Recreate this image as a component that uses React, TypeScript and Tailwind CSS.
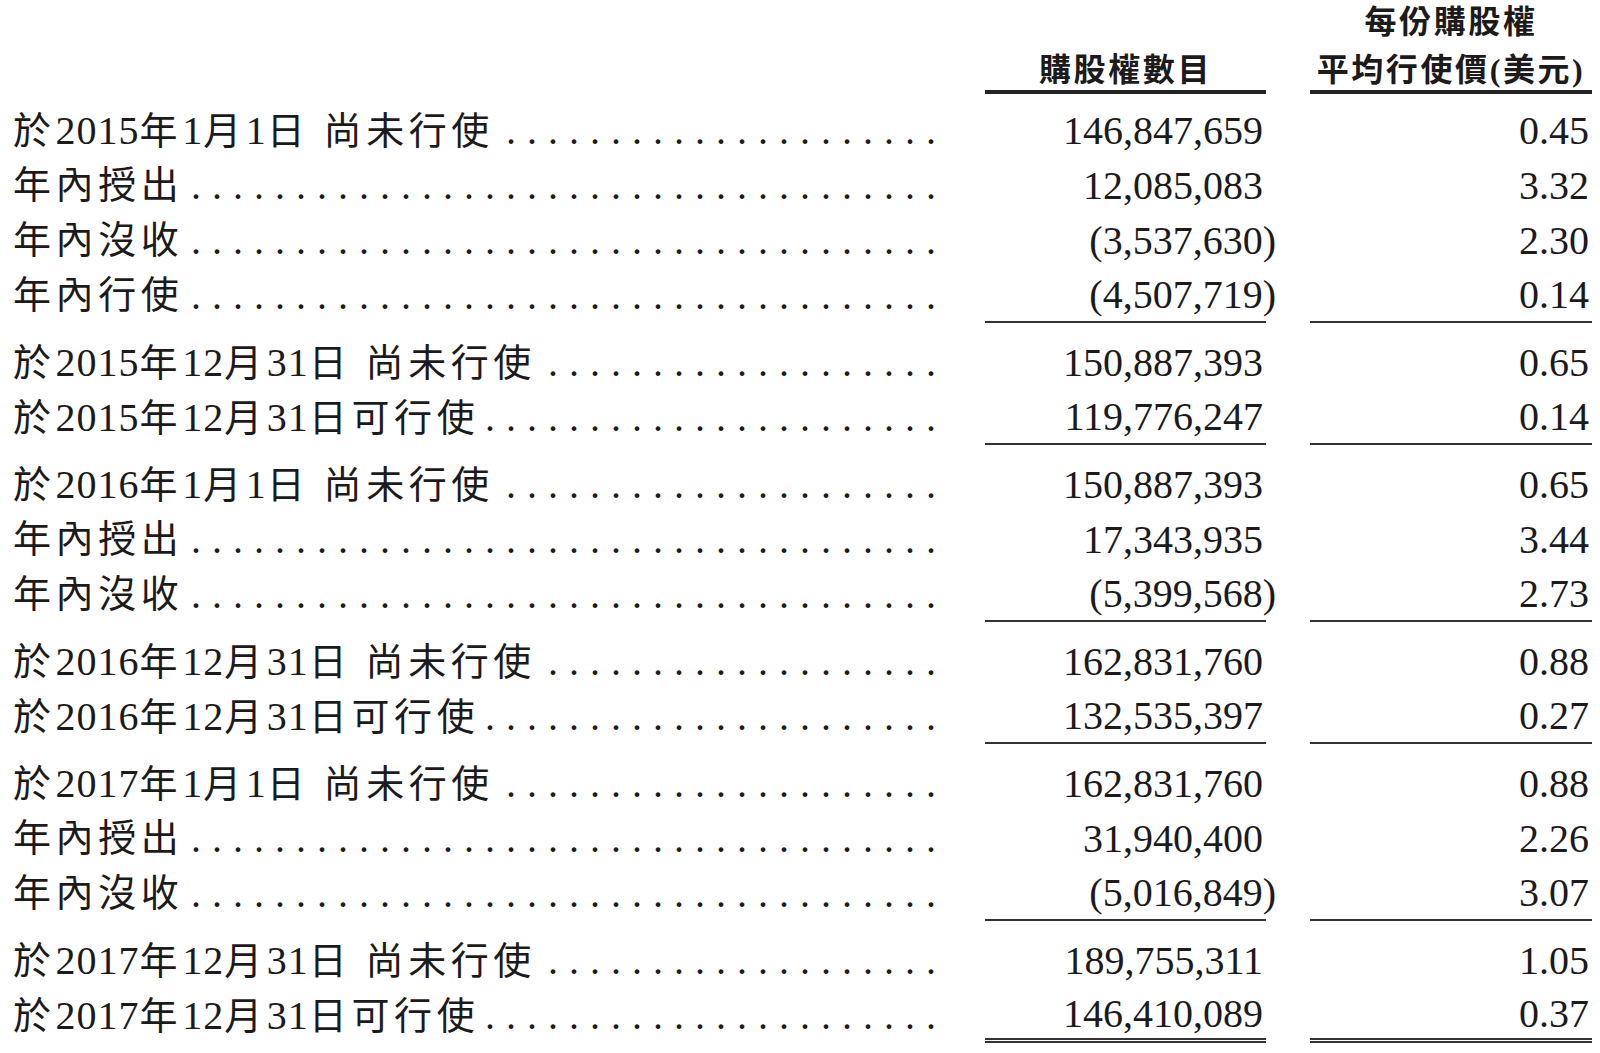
import React, { useLayoutEffect, useRef, useState } from "react";

type Row = { label: string; a: string; b: string; gap?: boolean };

const sections: Row[][] = [
  [
    { label: "於2015年1月1日 尚未行使", a: "146,847,659", b: "0.45", gap: true },
    { label: "年內授出", a: "12,085,083", b: "3.32" },
    { label: "年內沒收", a: "(3,537,630)", b: "2.30" },
    { label: "年內行使", a: "(4,507,719)", b: "0.14" },
  ],
  [
    { label: "於2015年12月31日 尚未行使", a: "150,887,393", b: "0.65", gap: true },
    { label: "於2015年12月31日可行使", a: "119,776,247", b: "0.14" },
  ],
  [
    { label: "於2016年1月1日 尚未行使", a: "150,887,393", b: "0.65", gap: true },
    { label: "年內授出", a: "17,343,935", b: "3.44" },
    { label: "年內沒收", a: "(5,399,568)", b: "2.73" },
  ],
  [
    { label: "於2016年12月31日 尚未行使", a: "162,831,760", b: "0.88", gap: true },
    { label: "於2016年12月31日可行使", a: "132,535,397", b: "0.27" },
  ],
  [
    { label: "於2017年1月1日 尚未行使", a: "162,831,760", b: "0.88", gap: true },
    { label: "年內授出", a: "31,940,400", b: "2.26" },
    { label: "年內沒收", a: "(5,016,849)", b: "3.07" },
  ],
  [
    { label: "於2017年12月31日 尚未行使", a: "189,755,311", b: "1.05", gap: true },
    { label: "於2017年12月31日可行使", a: "146,410,089", b: "0.37" },
  ],
];

function Label({ text }: { text: string }) {
  const parts = text.split(/(\d+)/).filter((p) => p.length > 0);
  return (
    <span className="whitespace-pre shrink-0">
      {parts.map((p, i) =>
        /^\d+$/.test(p) ? (
          <span key={i} className="text-[40px] tracking-[1px]">
            {p}
          </span>
        ) : (
          <span key={i}>{p}</span>
        )
      )}
    </span>
  );
}

function Leader({ gap }: { gap?: boolean }) {
  const ref = useRef<HTMLDivElement>(null);
  const [count, setCount] = useState(0);
  useLayoutEffect(() => {
    if (ref.current) {
      const w = ref.current.clientWidth;
      setCount(Math.max(0, Math.floor(w / 21)));
    }
  }, []);
  return (
    <div
      ref={ref}
      className={`flex-1 flex justify-end overflow-hidden tracking-[11px] text-[40px] ${
        gap ? "ml-[12px]" : ""
      }`}
    >
      <span className="whitespace-nowrap">{".".repeat(count)}</span>
    </div>
  );
}

function Num({ v }: { v: string }) {
  if (v.startsWith("(")) {
    return <span className="mr-[-13px]">{v}</span>;
  }
  return <span>{v}</span>;
}

export default function App() {
  return (
    <div
      className="w-[1600px] h-[1053px] bg-white text-[#1c1a1a] overflow-hidden pl-[13px]"
      style={{ fontFamily: '"Liberation Serif", "Noto Sans CJK TC", serif' }}
    >
      {/* Header */}
      <div className="flex items-end h-[94px]">
        <div className="w-[934px]" />
        <div
          className="ml-[38px] w-[281px] flex flex-col border-b-4 border-[#222] pb-[4px] font-bold text-[32px] tracking-[2.6px]"
          style={{ fontFamily: '"Noto Sans CJK TC", sans-serif' }}
        >
          <div className="h-[38px] leading-[38px] text-center">購股權數目</div>
        </div>
        <div
          className="ml-[44px] w-[282px] flex flex-col border-b-4 border-[#222] pb-[4px] font-bold text-[32px] tracking-[2.6px]"
          style={{ fontFamily: '"Noto Sans CJK TC", sans-serif' }}
        >
          <div className="h-[38px] leading-[38px] text-center">每份購股權</div>
          <div className="mt-[10px] h-[38px] leading-[38px] text-center whitespace-nowrap">
            平均行使價<span style={{ fontFamily: '"Liberation Serif", serif' }}>(</span>美元<span style={{ fontFamily: '"Liberation Serif", serif' }}>)</span>
          </div>
        </div>
      </div>

      {/* Body */}
      <div className="mt-[9px] flex flex-col gap-[12px]">
        {sections.map((sec, si) => {
          const lastSection = si === sections.length - 1;
          return (
            <div key={si} className="flex flex-col">
              {sec.map((r, ri) => {
                const last = ri === sec.length - 1;
                const lineCls = last
                  ? lastSection
                    ? "border-b-[5px] border-double border-[#333]"
                    : "border-b-2 border-[#333]"
                  : "";
                return (
                  <div key={ri} className="flex h-[55px]">
                    <div className="w-[934px] flex items-center text-[38px] leading-[55px] tracking-[4.6px] whitespace-nowrap">
                      <Label text={r.label} />
                      <Leader gap={r.gap} />
                    </div>
                    <div
                      className={`ml-[38px] w-[281px] flex items-center justify-end pr-[3px] text-[40px] leading-[55px] whitespace-nowrap ${lineCls}`}
                    >
                      <Num v={r.a} />
                    </div>
                    <div
                      className={`ml-[44px] w-[282px] flex items-center justify-end pr-[3px] text-[40px] leading-[55px] whitespace-nowrap ${lineCls}`}
                    >
                      <Num v={r.b} />
                    </div>
                  </div>
                );
              })}
            </div>
          );
        })}
      </div>
    </div>
  );
}
